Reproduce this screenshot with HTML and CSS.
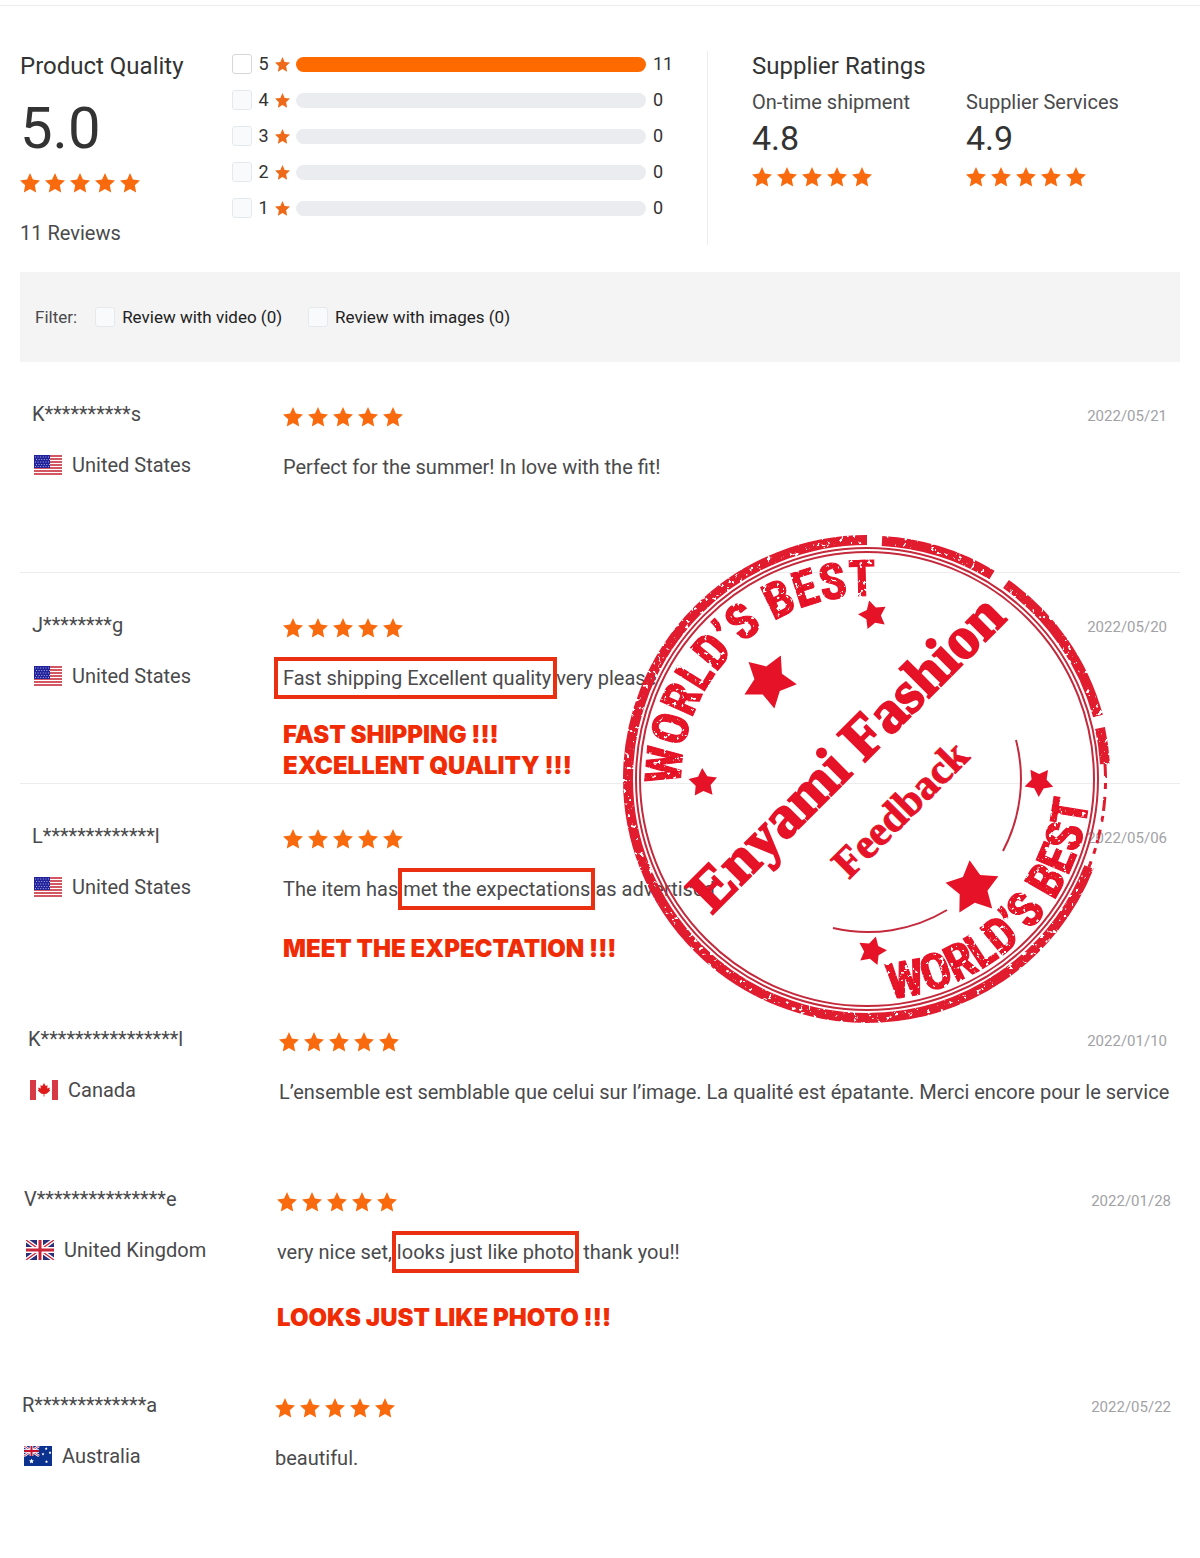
FILE: index.html
```html
<!DOCTYPE html>
<html lang="en">

<head>
    <meta charset="UTF-8">
    <meta name="viewport" content="width=device-width, initial-scale=1.0">
    <title>Product Reviews</title>
    <link rel="stylesheet" href="styles.css">
</head>

<body>

    <!-- Shared icons -->
    <svg class="icon-defs" aria-hidden="true">
        <symbol id="star" viewBox="0 0 20 20">
            <path d="M10 0 L12.9 6.5 L20 7.4 L14.8 12.2 L16.2 19.5 L10 16 L3.8 19.5 L5.2 12.2 L0 7.4 L7.1 6.5 Z" />
        </symbol>
        <symbol id="five-stars" viewBox="0 0 120 20">
            <use href="#star" x="0" width="20" height="20" />
            <use href="#star" x="25" width="20" height="20" />
            <use href="#star" x="50" width="20" height="20" />
            <use href="#star" x="75" width="20" height="20" />
            <use href="#star" x="100" width="20" height="20" />
        </symbol>
        <symbol id="flag-us" viewBox="0 0 28 20">
            <rect width="28" height="20" fill="#fff" />
            <path d="M0 1H28M0 4H28M0 7H28M0 10H28M0 13H28M0 16H28M0 19H28" stroke="#c4202f" stroke-width="1.7" />
            <rect width="16" height="13" fill="#22229a" />
            <path d="M1 2H16M2 4.5H16M1 7H16M2 9.5H16M1 11.6H16" stroke="#a9aee6" stroke-width="1" stroke-dasharray="1 1.6" />
        </symbol>
        <symbol id="flag-ca" viewBox="0 0 28 20">
            <rect width="28" height="20" fill="#fff" />
            <path d="M0 0H6V20H0ZM22 0H28V20H22Z" fill="#d83a45" />
            <path d="M14 3 L15.7 6 L17.6 5.2 L17.2 8.4 L20 7.6 L19.3 9.6 L20.2 10.6 L16.6 13.7 L14.4 14 V16.5 H13.6 V14 L11.4 13.7 L7.8 10.6 L8.7 9.6 L8 7.6 L10.8 8.4 L10.4 5.2 L12.3 6 Z" fill="#e01a1a" />
        </symbol>
        <symbol id="flag-gb" viewBox="0 0 28 20">
            <rect width="28" height="20" fill="#2a2f78" />
            <path d="M0 0L28 20M28 0L0 20" stroke="#fff" stroke-width="4" />
            <path d="M0 0L28 20M28 0L0 20" stroke="#c8243a" stroke-width="1.3" />
            <path d="M14 0V20M0 10H28" stroke="#fff" stroke-width="6" />
            <path d="M14 0V20M0 10H28" stroke="#c8243a" stroke-width="3" />
        </symbol>
        <symbol id="flag-au" viewBox="0 0 28 20">
            <rect width="28" height="20" fill="#0c3290" />
            <path d="M0 0L15 10M15 0L0 10" stroke="#fff" stroke-width="2.4" />
            <path d="M0 0L15 10M15 0L0 10" stroke="#c8102e" stroke-width="0.8" />
            <path d="M7.5 0V10M0 5H15" stroke="#fff" stroke-width="3.6" />
            <path d="M7.5 0V10M0 5H15" stroke="#c8102e" stroke-width="2" />
            <g fill="#fff">
                <use href="#star" x="5" y="12.5" width="5" height="5" />
                <use href="#star" x="20.7" y="1" width="3" height="3" />
                <use href="#star" x="17.5" y="6.5" width="3" height="3" />
                <use href="#star" x="24.5" y="5" width="3" height="3" />
                <use href="#star" x="21" y="14" width="3" height="3" />
            </g>
        </symbol>
        <symbol id="stamp-star" viewBox="-10 -10 20 20">
            <path d="M0 -10 L3.1 -4.3 L9.5 -3.1 L5 1.6 L5.9 8.1 L0 5.3 L-5.9 8.1 L-5 1.6 L-9.5 -3.1 L-3.1 -4.3 Z" />
        </symbol>
    </svg>

    <main class="reviews-page">

        <section class="summary">
            <div class="quality">
                <h2>Product Quality</h2>
                <p class="big-score">5.0</p>
                <svg class="stars"><use href="#five-stars" /></svg>
                <p class="review-count">11 Reviews</p>
            </div>

            <div class="breakdown">
                <div class="bar-row">
                    <input type="checkbox" id="star5">
                    <label for="star5">5 <svg class="small-star"><use href="#star" /></svg></label>
                    <span class="bar full"></span>
                    <span class="bar-count">11</span>
                </div>
                <div class="bar-row">
                    <input type="checkbox" id="star4" disabled>
                    <label for="star4">4 <svg class="small-star"><use href="#star" /></svg></label>
                    <span class="bar"></span>
                    <span class="bar-count">0</span>
                </div>
                <div class="bar-row">
                    <input type="checkbox" id="star3" disabled>
                    <label for="star3">3 <svg class="small-star"><use href="#star" /></svg></label>
                    <span class="bar"></span>
                    <span class="bar-count">0</span>
                </div>
                <div class="bar-row">
                    <input type="checkbox" id="star2" disabled>
                    <label for="star2">2 <svg class="small-star"><use href="#star" /></svg></label>
                    <span class="bar"></span>
                    <span class="bar-count">0</span>
                </div>
                <div class="bar-row">
                    <input type="checkbox" id="star1" disabled>
                    <label for="star1">1 <svg class="small-star"><use href="#star" /></svg></label>
                    <span class="bar"></span>
                    <span class="bar-count">0</span>
                </div>
            </div>

            <div class="supplier">
                <h2>Supplier Ratings</h2>
                <div class="supplier-scores">
                    <div class="supplier-item">
                        <p>On-time shipment</p>
                        <p class="score">4.8</p>
                        <svg class="stars"><use href="#five-stars" /></svg>
                    </div>
                    <div class="supplier-item">
                        <p>Supplier Services</p>
                        <p class="score">4.9</p>
                        <svg class="stars"><use href="#five-stars" /></svg>
                    </div>
                </div>
            </div>
        </section>

        <section class="filter">
            <span class="filter-title">Filter:</span>
            <div class="filter-option">
                <input type="checkbox" id="with-video" disabled>
                <label for="with-video">Review with video (0)</label>
            </div>
            <div class="filter-option">
                <input type="checkbox" id="with-images" disabled>
                <label for="with-images">Review with images (0)</label>
            </div>
        </section>

        <section class="review-list">
            <article class="review lined">
                <div class="customer">
                    <p class="name">K**********s</p>
                    <p class="country"><svg class="flag"><use href="#flag-us" /></svg>United States</p>
                </div>
                <div class="comment">
                    <svg class="stars"><use href="#five-stars" /></svg>
                    <p>Perfect for the summer! In love with the fit!</p>
                </div>
                <time class="date">2022/05/21</time>
            </article>

            <article class="review lined">
                <div class="customer">
                    <p class="name">J********g</p>
                    <p class="country"><svg class="flag"><use href="#flag-us" /></svg>United States</p>
                </div>
                <div class="comment">
                    <svg class="stars"><use href="#five-stars" /></svg>
                    <p><span class="marked wide">Fast shipping Excellent quality</span> very please</p>
                    <p class="note">FAST SHIPPING !!!<br>EXCELLENT QUALITY !!!</p>
                </div>
                <time class="date">2022/05/20</time>
            </article>

            <article class="review">
                <div class="customer">
                    <p class="name">L*************l</p>
                    <p class="country"><svg class="flag"><use href="#flag-us" /></svg>United States</p>
                </div>
                <div class="comment">
                    <svg class="stars"><use href="#five-stars" /></svg>
                    <p>The item has <span class="marked">met the expectations</span> as advertised</p>
                    <p class="note mid">MEET THE EXPECTATION !!!</p>
                </div>
                <time class="date">2022/05/06</time>
            </article>

            <article class="review short">
                <div class="customer">
                    <p class="name">K****************l</p>
                    <p class="country"><svg class="flag"><use href="#flag-ca" /></svg>Canada</p>
                </div>
                <div class="comment">
                    <svg class="stars"><use href="#five-stars" /></svg>
                    <p>L’ensemble est semblable que celui sur l’image. La qualité est épatante. Merci encore pour le service</p>
                </div>
                <time class="date">2022/01/10</time>
            </article>

            <article class="review outer">
                <div class="customer">
                    <p class="name">V***************e</p>
                    <p class="country"><svg class="flag"><use href="#flag-gb" /></svg>United Kingdom</p>
                </div>
                <div class="comment">
                    <svg class="stars"><use href="#five-stars" /></svg>
                    <p>very nice set, <span class="marked">looks just like photo</span>, thank you!!</p>
                    <p class="note low">LOOKS JUST LIKE PHOTO !!!</p>
                </div>
                <time class="date">2022/01/28</time>
            </article>

            <article class="review outer last">
                <div class="customer">
                    <p class="name">R*************a</p>
                    <p class="country"><svg class="flag"><use href="#flag-au" /></svg>Australia</p>
                </div>
                <div class="comment">
                    <svg class="stars"><use href="#five-stars" /></svg>
                    <p>beautiful.</p>
                </div>
                <time class="date">2022/05/22</time>
            </article>
        </section>

        <!-- Rubber stamp over the reviews -->
        <svg class="stamp" viewBox="0 0 490 490">
            <defs>
                <filter id="worn" x="0" y="0" width="490" height="490" filterUnits="userSpaceOnUse">
                    <feTurbulence type="fractalNoise" baseFrequency="0.22" numOctaves="4" seed="8" />
                    <feColorMatrix values="0 0 0 0 0  0 0 0 0 0  0 0 0 0 0  14 0 0 0 -3.9" result="holes" />
                    <feComposite in="SourceGraphic" in2="holes" operator="in" />
                </filter>
                <path id="top-arc" d="M59 251 A186 186 0 0 1 431 245" />
                <path id="bottom-arc" d="M268 465 A221 221 0 0 0 245 24" />
            </defs>
            <g class="ring">
                <g filter="url(#worn)">
                    <path class="band" d="M245 6 A239 239 0 0 0 6 245 A239 239 0 0 0 245 484 A239 239 0 0 0 467 333" />
                    <path class="band" d="M260 7 A239 239 0 0 1 370 41" />
                    <path class="band" d="M384 50 A239 239 0 0 1 476 182" />
                    <path class="band" d="M478 194 A239 239 0 0 1 483 230" />
                    <path class="band faint" d="M483 230 A239 239 0 0 1 467 333" />
                </g>
                <circle class="line" cx="245" cy="245" r="231" />
                <circle class="line" cx="245" cy="245" r="227" />
                <path class="line" d="M394 206 A154 154 0 0 1 381 317" />
                <path class="line" d="M211 394 A153 153 0 0 0 325 376" />
            </g>
            <g class="rim-text" filter="url(#worn)">
                <text><textPath href="#top-arc">WORLD’S BEST</textPath></text>
                <text><textPath href="#bottom-arc">WORLD’S BEST</textPath></text>
            </g>
            <g class="stamp-stars">
                <use href="#stamp-star" x="-28" y="-28" width="56" height="56" transform="translate(147 147) rotate(25)" />
                <use href="#stamp-star" x="-28" y="-28" width="56" height="56" transform="translate(351 354) rotate(-7)" />
                <use href="#stamp-star" x="-15" y="-15" width="30" height="30" transform="translate(251 81) rotate(-15)" />
                <use href="#stamp-star" x="-15" y="-15" width="30" height="30" transform="translate(81 249) rotate(-3)" />
                <use href="#stamp-star" x="-15" y="-15" width="30" height="30" transform="translate(417 248) rotate(37)" />
                <use href="#stamp-star" x="-15" y="-15" width="30" height="30" transform="translate(250 417) rotate(15)" />
            </g>
            <text class="shop" transform="translate(90 381) rotate(-45)">Enyami Fashion</text>
            <text class="shop small" transform="translate(227 346) rotate(-45)">Feedback</text>
        </svg>
    </main>

</body>

</html>
```
FILE: styles.css
```css
body {
    font-family: Roboto, Arial, sans-serif;
    font-size: 20px;
    line-height: 24px;
    margin: 0;
    color: #4a4a4c;
    background-color: #fff;
}

h2,
p {
    margin: 0;
}

h2 {
    font-size: 24px;
    line-height: 30px;
    font-weight: normal;
    color: #333;
}

input[type="checkbox"] {
    appearance: none;
    width: 20px;
    height: 20px;
    margin: 0;
    border: 1px solid #d5d7da;
    border-radius: 3px;
    background-color: #fff;
    flex-shrink: 0;
}

input[type="checkbox"]:disabled {
    border-color: #e6e9ec;
    background-color: #f8fafb;
}

.icon-defs {
    position: absolute;
    width: 0;
    height: 0;
}

.reviews-page {
    position: relative;
    margin-top: 5px;
    padding: 0 20px;
    border-top: 1px solid #ececec;
}

.stars {
    display: block;
    width: 120px;
    height: 20px;
    fill: #f96a0e;
}

/* Rating summary */
.summary {
    display: flex;
    padding: 45px 0 27px;
}

.quality {
    width: 213px;
}

.big-score {
    font-size: 58px;
    line-height: 64px;
    margin: 15px 0 13px;
    color: #333;
}

.review-count {
    margin-top: 28px;
}

.breakdown {
    display: flex;
    flex-direction: column;
    gap: 16px;
    width: 476px;
    padding-top: 3px;
    border-right: 1px solid #ececef;
}

.bar-row {
    display: flex;
    align-items: center;
    height: 20px;
    font-size: 18px;
    line-height: 20px;
    color: #333;
}

.bar-row label {
    display: flex;
    align-items: center;
    gap: 6px;
    margin: 0 6px;
}

.small-star {
    width: 15px;
    height: 15px;
    fill: #ee6a1a;
}

.bar {
    flex: 1;
    height: 15px;
    border-radius: 8px;
    background-color: #ebecef;
}

.bar.full {
    background-color: #ff6a00;
}

.bar-count {
    width: 54px;
    margin-left: 7px;
}

.supplier {
    flex: 1;
    padding-left: 44px;
}

.supplier-scores {
    display: flex;
    margin-top: 9px;
}

.supplier-item {
    width: 214px;
}

.score {
    font-size: 34px;
    line-height: 40px;
    margin: 4px 0 9px;
    color: #333;
}

/* Filter bar */
.filter {
    display: flex;
    align-items: center;
    height: 90px;
    padding: 0 15px;
    font-size: 17px;
    background-color: #f4f4f4;
}

.filter-title {
    margin-right: 18px;
}

.filter-option {
    display: flex;
    align-items: center;
    gap: 7px;
    margin-right: 26px;
    color: #222;
}

/* Reviews */
.review {
    display: flex;
    box-sizing: border-box;
    min-height: 203px;
    padding: 40px 13px 0 12px;
}

.review.lined {
    min-height: 211px;
    border-bottom: 1px solid #ececec;
}

.review.short {
    min-height: 160px;
    padding-left: 8px;
}

.review.outer {
    min-height: 206px;
    padding-left: 4px;
    padding-right: 9px;
}

.review.last {
    padding-left: 2px;
}

.customer {
    width: 251px;
    flex-shrink: 0;
}

.outer .customer {
    width: 253px;
}

.country {
    display: flex;
    align-items: center;
    gap: 10px;
    margin-top: 27px;
}

.flag {
    width: 28px;
    height: 20px;
    margin-left: 2px;
}

.comment {
    flex: 1;
    min-width: 0;
    white-space: nowrap;
}

.comment .stars {
    margin: 5px 0 28px;
}

.date {
    font-size: 15px;
    line-height: 28px;
    color: #a2a2a6;
}

.marked {
    position: relative;
}

.marked::after {
    content: "";
    position: absolute;
    inset: -9px -5px;
    border: 4px solid #ea3010;
}

.marked.wide::after {
    inset: -9px -6px -9px -9px;
}

.note {
    margin-top: 29px;
    font-family: Inter, "Arial Black", sans-serif;
    font-size: 24px;
    line-height: 31px;
    font-weight: 900;
    color: #f02c06;
}

.note.mid {
    margin-top: 32px;
}

.note.low {
    margin-top: 38px;
}

/* Stamp */
.stamp {
    position: absolute;
    top: 528px;
    left: 622px;
    width: 490px;
    height: 490px;
    fill: #e61227;
}

.ring {
    fill: none;
    stroke: #e01a2e;
}

.band {
    stroke-width: 10px;
}

.faint {
    stroke-width: 3px;
    stroke-dasharray: 14px 5px 6px 8px;
}

.line {
    stroke: #c4293c;
    stroke-width: 2px;
}

.rim-text {
    font-family: "Liberation Sans Narrow", "Roboto Condensed", Roboto, sans-serif;
    font-size: 50px;
    font-weight: bold;
    stroke: #e61227;
    stroke-width: 1px;
}

.shop {
    font-family: "Liberation Serif", serif;
    font-size: 60px;
    font-weight: bold;
    stroke: #e61227;
    stroke-width: 2px;
}

.shop.small {
    font-size: 42px;
    stroke-width: 1px;
}
```
